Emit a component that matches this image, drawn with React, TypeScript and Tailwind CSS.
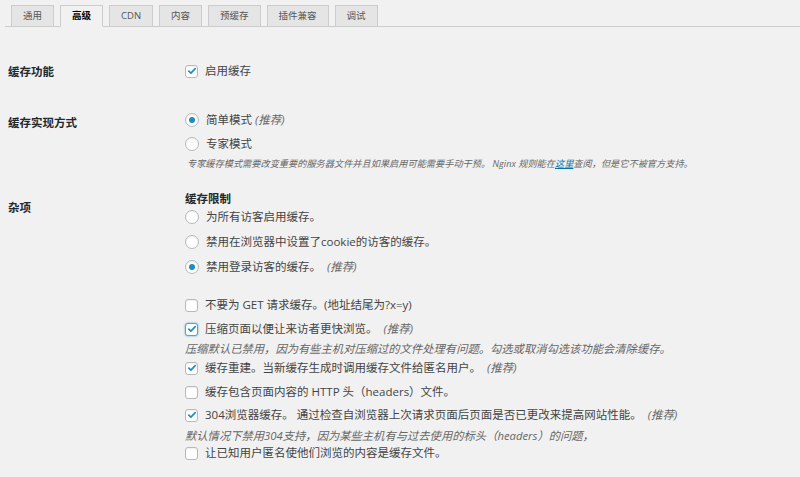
import type { ReactNode } from 'react'

const tabs = ['通用', '高级', 'CDN', '内容', '预缓存', '插件兼容', '调试']

function Checkbox({ checked, focus }: { checked?: boolean; focus?: boolean }) {
  return (
    <span
      className={
        'flex h-[13px] w-[13px] shrink-0 items-center justify-center rounded-[3px] border bg-white ' +
        (focus
          ? 'border-[#5b9dd9] shadow-[0_0_2px_rgba(30,140,190,0.8)]'
          : 'border-[#b4b9be] shadow-[inset_0_1px_2px_rgba(0,0,0,0.07)]')
      }
    >
      {checked && (
        <svg viewBox="0 0 12 12" className="h-[10px] w-[10px]" aria-hidden>
          <path d="M2.2 6.2l2.5 2.4L9.8 3.2" fill="none" stroke="#1e8cbe" strokeWidth={2} strokeLinecap="round" strokeLinejoin="round" />
        </svg>
      )}
    </span>
  )
}

function Radio({ checked }: { checked?: boolean }) {
  return (
    <span className="flex h-[14px] w-[14px] shrink-0 items-center justify-center rounded-full border border-[#b4b9be] bg-white shadow-[inset_0_1px_2px_rgba(0,0,0,0.07)]">
      {checked && <span className="h-[6px] w-[6px] rounded-full bg-[#1e8cbe]" />}
    </span>
  )
}

function Line({ control, children, className = '' }: { control: ReactNode; children: ReactNode; className?: string }) {
  return (
    <div className={'flex h-[20px] items-center gap-[7px] text-[11.5px] leading-none text-[#444] ' + className}>
      {control}
      <span className="whitespace-nowrap">{children}</span>
    </div>
  )
}

function Rec() {
  return <i className="ml-[6px] text-[#666]">(推荐)</i>
}

function Desc({ children, className = '' }: { children: ReactNode; className?: string }) {
  return (
    <p className={'flex h-[14px] items-center whitespace-nowrap italic leading-none text-[#666] ' + className}>{children}</p>
  )
}

export default function App() {
  return (
    <div
      className="h-[477px] w-[800px] overflow-hidden bg-[#f1f1f1]"
      style={{ fontFamily: '"Open Sans", "Noto Sans", "Noto Sans CJK SC", sans-serif' }}
    >
      {/* tabs */}
      <div className="ml-[5px] flex border-b border-[#ccc] pt-[5px]">
        {tabs.map((t, i) => (
          <div
            key={t}
            className={
              'ml-[6px] -mb-px flex h-[22px] items-center border px-[11px] text-[9.5px] leading-none ' +
              (i === 1
                ? 'border-[#ccc] border-b-[#f1f1f1] bg-[#f1f1f1] font-bold text-[#000]'
                : 'border-[#ccc] bg-[#e5e5e5] text-[#555]')
            }
          >
            {t}
          </div>
        ))}
      </div>

      {/* 缓存功能 */}
      <div className="mt-[36px] flex">
        <div className="w-[185px] pl-[8px] pt-[1px] text-[11.5px] font-bold leading-[16px] text-[#23282d]">缓存功能</div>
        <div className="flex h-[16px] items-center gap-[7px] text-[11.5px] leading-none text-[#444]">
          <Checkbox checked />
          <span>启用缓存</span>
        </div>
      </div>

      {/* 缓存实现方式 */}
      <div className="mt-[30px] flex">
        <div className="w-[185px] pl-[8px] pt-[5px] text-[11.5px] font-bold leading-[16px] text-[#23282d]">缓存实现方式</div>
        <div className="flex flex-col">
          <Line control={<Radio checked />}>
            简单模式 <i className="text-[#666]">(推荐)</i>
          </Line>
          <Line control={<Radio />} className="mt-[4px]">
            专家模式
          </Line>
          <Desc className="mt-[3px] ml-[2px] text-[9.2px]">
            专家缓存模式需要改变重要的服务器文件并且如果启用可能需要手动干预。 Nginx 规则能在
            <a className="text-[#0073aa] underline">这里</a>
            查阅，但是它不被官方支持。
          </Desc>
        </div>
      </div>

      {/* 杂项 */}
      <div className="mt-[20px] flex">
        <div className="w-[185px] pl-[8px] pt-[9px] text-[11.5px] font-bold leading-[16px] text-[#23282d]">杂项</div>
        <div className="flex flex-col">
          <div className="flex h-[16px] items-center text-[11.5px] font-bold leading-none text-[#23282d]">缓存限制</div>
          <Line control={<Radio />}>为所有访客启用缓存。</Line>
          <Line control={<Radio />} className="mt-[5px]">
            禁用在浏览器中设置了cookie的访客的缓存。
          </Line>
          <Line control={<Radio checked />} className="mt-[5px]">
            禁用登录访客的缓存。
            <Rec />
          </Line>

          <Line control={<Checkbox />} className="mt-[18px]">
            不要为 GET 请求缓存。(地址结尾为?x=y)
          </Line>
          <Line control={<Checkbox checked focus />} className="mt-[4px]">
            压缩页面以便让来访者更快浏览。
            <Rec />
          </Line>
          <Desc className="mt-[3px] text-[11.3px]">
            压缩默认已禁用，因为有些主机对压缩过的文件处理有问题。勾选或取消勾选该功能会清除缓存。
          </Desc>
          <Line control={<Checkbox checked />} className="mt-[2px]">
            缓存重建。当新缓存生成时调用缓存文件给匿名用户。
            <Rec />
          </Line>
          <Line control={<Checkbox />} className="mt-[4px]">
            缓存包含页面内容的 HTTP 头（headers）文件。
          </Line>
          <Line control={<Checkbox checked />} className="mt-[3px]">
            304浏览器缓存。 通过检查自浏览器上次请求页面后页面是否已更改来提高网站性能。
            <Rec />
          </Line>
          <Desc className="mt-[4px] text-[11.3px]">
            默认情况下禁用304支持，因为某些主机有与过去使用的标头（headers）的问题，
          </Desc>
          <Line control={<Checkbox />}>让已知用户匿名使他们浏览的内容是缓存文件。</Line>
        </div>
      </div>
    </div>
  )
}
